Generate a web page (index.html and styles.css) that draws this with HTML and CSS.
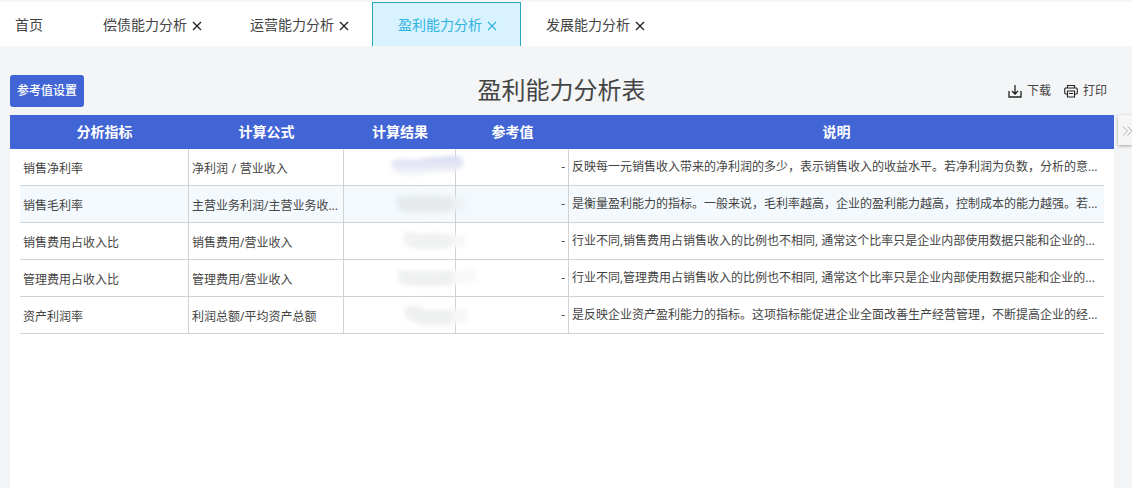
FILE: index.html
```html
<!DOCTYPE html>
<html lang="zh-CN">
<head>
<meta charset="utf-8">
<title>盈利能力分析表</title>
<link rel="stylesheet" href="styles.css">
</head>
<body>
<nav class="tabs">
  <a class="tab home">首页</a>
  <a class="tab">偿债能力分析<svg class="close" viewBox="0 0 10 10"><path d="M1 1l8 8M9 1l-8 8"/></svg></a>
  <a class="tab third">运营能力分析<svg class="close" viewBox="0 0 10 10"><path d="M1 1l8 8M9 1l-8 8"/></svg></a>
  <a class="tab active">盈利能力分析<svg class="close" viewBox="0 0 10 10"><path d="M1 1l8 8M9 1l-8 8"/></svg></a>
  <a class="tab last">发展能力分析<svg class="close" viewBox="0 0 10 10"><path d="M1 1l8 8M9 1l-8 8"/></svg></a>
</nav>
<main class="page">
  <header class="toolbar">
    <div class="side"><button class="setting">参考值设置</button></div>
    <h1 class="title">盈利能力分析表</h1>
    <div class="side actions">
      <span class="action"><svg class="icon" viewBox="0 0 14 14"><path d="M1 7V13h12V7M7 1v9M4 7L7 10l3-3"/></svg>下载</span>
      <span class="action"><svg class="icon printer" viewBox="0 0 14 14"><path d="M3.500 4V1.500h7V4M3.500 10H1.500L.7 9V5l.8-1h11l.8 1v4l-.8 1h-2M3.500 7h7v6h-7zM5 9.500h4"/></svg>打印</span>
    </div>
  </header>
  <section class="panel">
    <div class="row head"><div>分析指标</div><div>计算公式</div><div>计算结果</div><div>参考值</div><div>说明</div></div>
    <div class="row">
      <div class="cell">销售净利率</div><div class="cell spaced">净利润 / 营业收入</div>
      <div class="cell result"><svg class="smudge" viewBox="0 0 100 36"><defs><linearGradient id="fade" x1="0" y1="0" x2="0" y2="1"><stop offset="0" stop-color="#d5d9f0"/><stop offset="1" stop-color="#f5f6f9"/></linearGradient></defs><path fill="url(#fade)" d="M12 12Q20 9 34 11Q50 8 64 8Q80 4 83 12Q84 23 72 22L54 23Q38 27 24 26Q8 22 12 12Z"/></svg></div>
      <div class="cell num">-</div><div class="cell desc">反映每一元销售收入带来的净利润的多少，表示销售收入的收益水平。若净利润为负数，分析的意...</div>
    </div>
    <div class="row hover">
      <div class="cell">销售毛利率</div><div class="cell">主营业务利润/主营业务收...</div>
      <div class="cell result"><svg class="smudge" viewBox="0 0 100 36"><path fill="#e6eaed" d="M17 11Q48 8 74 11L73 25Q45 28 22 25Q15 20 17 11Z"/><path fill="#edf1f4" d="M72 11h12v13H72z"/></svg></div>
      <div class="cell num">-</div><div class="cell desc">是衡量盈利能力的指标。一般来说，毛利率越高，企业的盈利能力越高，控制成本的能力越强。若...</div>
    </div>
    <div class="row">
      <div class="cell">销售费用占收入比</div><div class="cell">销售费用/营业收入</div>
      <div class="cell result"><svg class="smudge" viewBox="0 0 100 36"><path fill="#f0f1f1" d="M25 9Q32 8 39 11Q60 9 74 12V24Q55 28 37 26Q24 24 24 17Z"/><path fill="#f7f7f7" d="M72 11l14 1v12H72z"/></svg></div>
      <div class="cell num">-</div><div class="cell desc">行业不同,销售费用占销售收入的比例也不相同, 通常这个比率只是企业内部使用数据只能和企业的...</div>
    </div>
    <div class="row">
      <div class="cell">管理费用占收入比</div><div class="cell">管理费用/营业收入</div>
      <div class="cell result"><svg class="smudge" viewBox="0 0 100 36"><path fill="#eff0f0" d="M19 10Q42 12 74 10V25Q46 28 20 24Q17 18 19 10Z"/><path fill="#f8f8f8" d="M72 11l24-2v13l-24 2z"/></svg></div>
      <div class="cell num">-</div><div class="cell desc">行业不同,管理费用占销售收入的比例也不相同, 通常这个比率只是企业内部使用数据只能和企业的...</div>
    </div>
    <div class="row">
      <div class="cell">资产利润率</div><div class="cell">利润总额/平均资产总额</div>
      <div class="cell result"><svg class="smudge" viewBox="0 0 100 36"><path fill="#eff0f0" d="M25 11Q34 5 44 12Q60 14 74 12V27Q50 31 36 26Q25 23 24 17Z"/><path fill="#f7f7f7" d="M72 13l15-1v13l-15 2z"/></svg></div>
      <div class="cell num">-</div><div class="cell desc">是反映企业资产盈利能力的指标。这项指标能促进企业全面改善生产经营管理，不断提高企业的经...</div>
    </div>
  </section>
</main>
<div class="drawer"><svg class="chevrons" viewBox="0 0 12 12"><path d="M1 1l5 5-5 5M6 1l5 5-5 5"/></svg></div>
</body>
</html>
```
FILE: styles.css
```css
* { box-sizing: border-box; }
body {
  margin: 0;
  height: 488px;
  overflow: hidden;
  display: flex;
  flex-direction: column;
  background: #f3f5f7;
  color: #444;
  font: 12px "Open Sans", "Noto Sans CJK SC", sans-serif;
}
.tabs {
  display: flex;
  flex: none;
  height: 46px;
  border-top: 2px solid #f5f5f6;
  background: #fff;
  font-size: 14px;
}
.tab {
  display: flex;
  align-items: center;
  gap: 5px;
  width: 146px;
  padding: 2px 0 0 24px;
  line-height: 20px;
  white-space: nowrap;
}
.home { width: 79px; padding-left: 15px; }
.third { width: 147px; padding-left: 25px; }
.last { padding-left: 25px; }
.active {
  width: 149px;
  padding: 1px 0 0 25px;
  border: 1px solid #29a9c0;
  border-bottom: 0;
  background: #d8f2ff;
  color: #2fb3e0;
}
.close { width: 10px; height: 10px; margin-top: 2px; fill: none; stroke: #222; stroke-width: 1.3; }
.active .close { stroke: #2fb3e0; stroke-width: 1.1; }
.page {
  display: flex;
  flex-direction: column;
  flex: 1;
  width: 1104px;
  margin-left: 10px;
}
.toolbar { display: flex; align-items: center; flex: none; height: 69px; padding-top: 20px; }
.side { flex: 1; display: flex; }
.setting {
  width: 74px;
  height: 32px;
  padding: 0 0 2px;
  border: 0;
  border-radius: 3px;
  background: #4265d6;
  color: #fff;
  font: 500 12px "Open Sans", "Noto Sans CJK SC", sans-serif;
}
.title { margin: 0 -3px 2px 3px; font-size: 24px; line-height: 32px; font-weight: 400; }
.actions { justify-content: flex-end; gap: 13px; padding-right: 7px; }
.action { display: flex; align-items: center; gap: 5px; line-height: 18px; }
.icon { width: 14px; height: 14px; margin-top: 1px; fill: none; stroke: #222; stroke-width: 1.3; }
.printer { stroke-width: 1.1; }
.panel { flex: 1; background: #fff; }
.row {
  display: grid;
  grid-template-columns: 169px 155px 112px 113px 535px;
  height: 37px;
  margin: 0 10px;
  border-bottom: 1px solid #d0d2d3;
}
.head {
  height: 34px;
  margin: 0;
  padding: 0 10px;
  border: 0;
  background: #4265d6;
  color: #fff;
  font-size: 14px;
  font-weight: 700;
  line-height: 34px;
  text-align: center;
}
.hover { background: #f3f9fd; }
.cell {
  padding: 3px 3px 0;
  border-right: 1px solid #d0d2d3;
  line-height: 34px;
  white-space: nowrap;
}
.spaced { word-spacing: .6px; }
.result { position: relative; padding: 0; }
.smudge { position: absolute; left: 36px; top: 0; z-index: 1; width: 100px; height: 36px; filter: blur(2px); }
.num { padding-top: 1px; text-align: right; }
.desc { padding-top: 1px; border-right: 0; }
.drawer {
  position: absolute;
  right: 0;
  top: 115px;
  width: 14px;
  height: 30px;
  padding: 10px 0 0 4px;
  background: #f5f5f5;
  box-shadow: 0 1px 3px rgba(0, 0, 0, .35);
}
.chevrons { display: block; width: 11px; height: 12px; fill: none; stroke: #aaa; stroke-width: 1; }
```
